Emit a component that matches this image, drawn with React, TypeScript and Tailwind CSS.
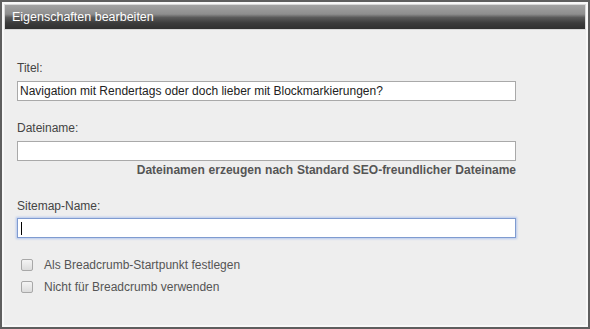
import React from "react";

export default function App() {
  const font = { fontFamily: '"Liberation Sans", Arial, sans-serif' };
  return (
    <div style={font} className="w-[590px] h-[329px] border-2 border-[#5e5e5e] bg-[#f8f8f8] p-[2px] flex flex-col">
      <div className="h-[26px] border border-[#d8d8d8] bg-[linear-gradient(to_bottom,#a2a2a2_0%,#8e8e8e_38%,#5a5a5a_52%,#3c3c3c_75%,#303030_100%)] flex items-center pl-[7px]">
        <span className="text-[12.5px] text-white leading-none">Eigenschaften bearbeiten</span>
      </div>
      <div className="flex-1 bg-[#eeeeee] pl-[13px] pt-[31px] flex flex-col text-[12px] leading-[14px] text-[#444]">
        <label className="block">Titel:</label>
        <div className="mt-[6px] w-[499px] h-[20px] border border-[#a9a9a9] bg-white flex items-center px-[2px] text-[12px] text-[#222]">
          Navigation mit Rendertags oder doch lieber mit Blockmarkierungen?
        </div>
        <label className="block mt-[20px]">Dateiname:</label>
        <div className="mt-[6px] w-[499px] h-[20px] border border-[#a9a9a9] bg-white" />
        <div className="w-[499px] text-right font-bold text-[#555] text-[12px] mt-[2px] [word-spacing:0.5px]">
          Dateinamen erzeugen nach Standard SEO-freundlicher Dateiname
        </div>
        <label className="block mt-[22px]">Sitemap-Name:</label>
        <div className="mt-[5px] w-[499px] h-[20px] border border-[#7f9bd0] shadow-[0_0_2px_1px_#b5c8ee] bg-white flex items-center pl-[3px]">
          <span className="w-px h-[13px] bg-black" />
        </div>
        <div className="mt-[20px] flex flex-col gap-[8px] pl-[4px] text-[#555]">
          <div className="flex items-center gap-[11px]">
            <span className="w-[12px] h-[12px] border border-[#a8a8a8] rounded-[2px] bg-[linear-gradient(to_bottom,#f4f4f4,#dcdcdc)]" />
            <span>Als Breadcrumb-Startpunkt festlegen</span>
          </div>
          <div className="flex items-center gap-[11px]">
            <span className="w-[12px] h-[12px] border border-[#a8a8a8] rounded-[2px] bg-[linear-gradient(to_bottom,#f4f4f4,#dcdcdc)]" />
            <span>Nicht für Breadcrumb verwenden</span>
          </div>
        </div>
      </div>
    </div>
  );
}
